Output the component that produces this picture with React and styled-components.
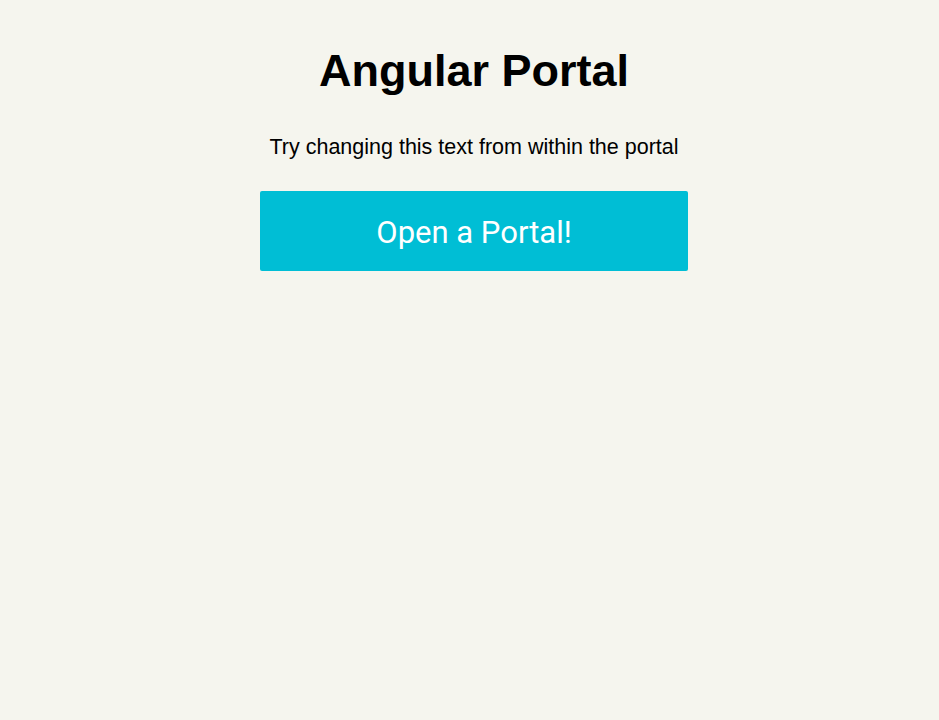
import React from "react";
import styled, { createGlobalStyle } from "styled-components";

const Global = createGlobalStyle`
  html, body { margin: 0; padding: 0; background: #f5f5ee; }
  body { font-family: "Liberation Sans", Arial, sans-serif; color: #000; }
`;

const Page = styled.main`
  min-height: 720px;
  display: flex;
  flex-direction: column;
  align-items: center;
  padding: 40px 0 0 9px;
  box-sizing: border-box;
`;

const Title = styled.h1`
  margin: 0;
  font-size: 45px;
  font-weight: 700;
  line-height: 62px;
`;

const Text = styled.p`
  margin: 32px 0 0;
  font-size: 21.5px;
  line-height: 26px;
`;

const PortalButton = styled.button`
  margin-top: 31px;
  width: 428px;
  height: 80px;
  padding: 3px 0 0;
  border: none;
  border-radius: 2px;
  background: #00bed5;
  color: #fff;
  font-family: Roboto, "Liberation Sans", sans-serif;
  font-size: 31px;
  font-weight: 400;
  cursor: pointer;
`;

export default function App() {
  return (
    <>
      <Global />
      <Page>
        <Title>Angular Portal</Title>
        <Text>Try changing this text from within the portal</Text>
        <PortalButton>Open a Portal!</PortalButton>
      </Page>
    </>
  );
}
